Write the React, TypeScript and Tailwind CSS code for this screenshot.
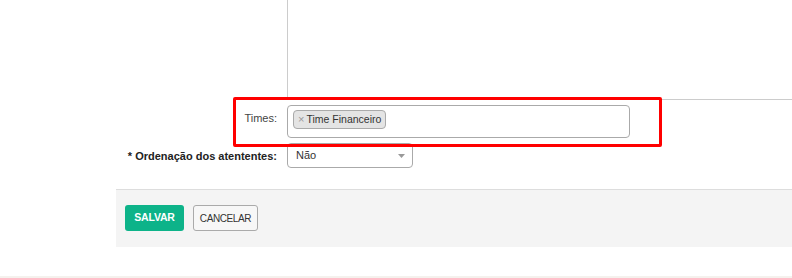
import React from "react";

export default function App() {
  const font = { fontFamily: '"Liberation Sans", Arial, sans-serif' };
  return (
    <div className="relative w-[792px] h-[278px] bg-white overflow-hidden text-[#333]" style={font}>
      {/* textarea bottom part */}
      <div className="ml-[287px] h-[100px] border-l border-b border-[#cccccc]" />

      {/* Times row */}
      <div className="flex mt-[5px]">
        <div className="w-[287px] pr-[10px] pt-[5px] text-right text-[11px] text-[#444]">Times:</div>
        <div className="w-[343px] h-[33px] border border-[#aaaaaa] rounded-[4px] bg-white px-[5px] pt-[4px] flex items-start">
          <span className="inline-flex items-center h-[19px] pl-[4px] pr-[4px] bg-[#e4e4e4] border border-[#aaaaaa] rounded-[4px] text-[10.5px] text-[#333] leading-none">
            <span className="text-[#999] mr-[2px] text-[11px]">×</span>Time Financeiro
          </span>
        </div>
      </div>

      {/* Ordenação row */}
      <div className="flex mt-[5px]">
        <div className="w-[287px] pr-[10px] pt-[5px] text-right text-[11px] font-bold text-[#222]">* Ordenação dos atententes:</div>
        <div className="w-[126px] h-[25px] border border-[#aaaaaa] rounded-[4px] bg-white flex items-center justify-between pl-[8px] pr-[7px]">
          <span className="text-[11px] text-[#333]">Não</span>
          <svg width="7" height="4" viewBox="0 0 7 4"><path d="M0 0 L7 0 L3.5 4 Z" fill="#999" /></svg>
        </div>
      </div>

      {/* footer */}
      <div className="ml-[116px] mt-[21px] h-[58px] bg-[#f4f4f4] border-t border-[#dddddd] flex items-start gap-[9px] pl-[9px] pt-[15px]">
        <button className="h-[26px] w-[59px] rounded-[3px] bg-[#0db389] text-white text-[10.5px] font-bold tracking-[-0.2px]">SALVAR</button>
        <button className="h-[26px] w-[65px] rounded-[3px] bg-[#f7f7f7] border border-[#aaaaaa] text-[#333] text-[10px] tracking-[-0.4px]">CANCELAR</button>
      </div>

      <div className="absolute left-0 right-0 bottom-0 h-[2px] bg-[#f5f1ed]" />

      {/* red annotation box */}
      <div className="absolute left-[233px] top-[97px] w-[429px] h-[50px] border-[3px] border-[#ff0000] rounded-[2px]" />
    </div>
  );
}
